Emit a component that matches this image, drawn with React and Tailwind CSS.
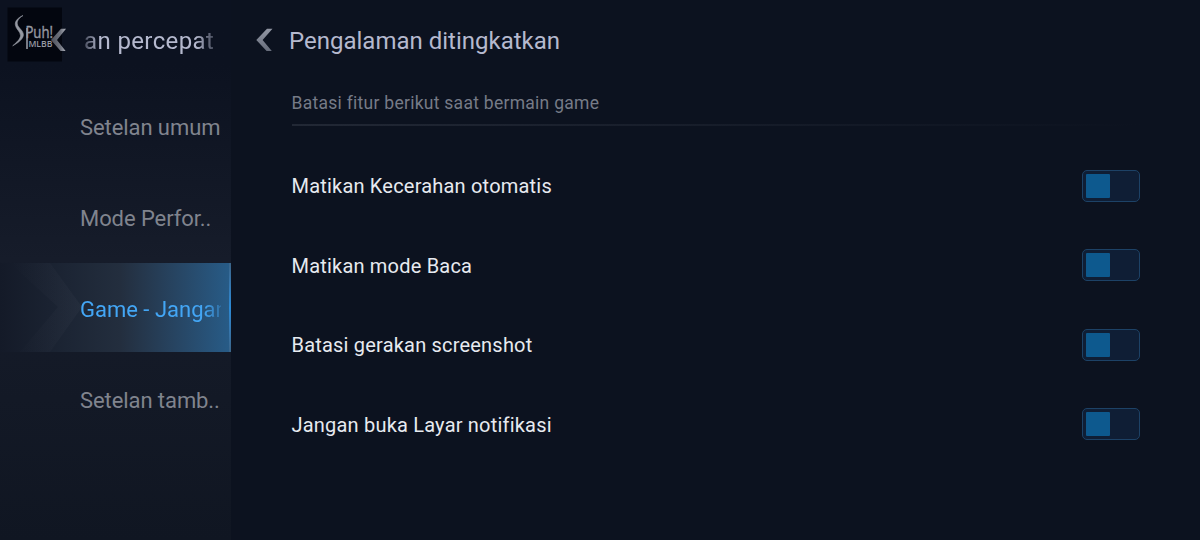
const menu = [
  { label: "Setelan umum" },
  { label: "Mode Perfor.." },
  { label: "Game - Jangan", active: true },
  { label: "Setelan tamb.." },
];

const settings = [
  "Matikan Kecerahan otomatis",
  "Matikan mode Baca",
  "Batasi gerakan screenshot",
  "Jangan buka Layar notifikasi",
];

function BackChevron() {
  return (
    <svg className="-mt-[2px] shrink-0" width="17" height="24" viewBox="0 0 17 24">
      <defs>
        <linearGradient id="back-fill" x1="0" y1="0" x2="0" y2="1">
          <stop offset="0" stopColor="#9297a4" />
          <stop offset="1" stopColor="#676d7b" />
        </linearGradient>
      </defs>
      <path d="M11 .8H16.500L6.600 12L15.800 23H10.600L.3 12Z" fill="url(#back-fill)" />
    </svg>
  );
}

function SideChevron() {
  return (
    <svg className="relative z-10 -mt-[2px] shrink-0" width="17" height="24" viewBox="0 0 17 24">
      <defs>
        <linearGradient id="side-fill" x1="0" y1="0" x2="1" y2="0">
          <stop offset="0" stopColor="#6e727d" stopOpacity=".7" />
          <stop offset=".65" stopColor="#717580" />
          <stop offset="1" stopColor="#b4b7c0" />
        </linearGradient>
      </defs>
      <path d="M11 .8H16L7 12L15.600 23H10.600L1 12Z" fill="url(#side-fill)" />
    </svg>
  );
}

function Logo() {
  return (
    <svg className="absolute left-[7px] top-[7px]" width="60" height="55" viewBox="0 0 60 55">
      <rect x="0.500" y="0.500" width="54.500" height="54" fill="#03060f" />
      <path
        d="M16 8.500C12 11 9.800 14 10.300 17C11 21 16.600 23.500 16.400 28C16.200 32 11 36 5.700 38.800C10 35 13.400 32 13.500 28.500C13.600 24.500 8.600 22 8.300 17.500C8 13.500 11.500 10.500 16 8.500Z"
        fill="#9699a2"
        stroke="#9699a2"
        strokeWidth=".6"
      />
      <path d="M20 21V42" stroke="#9699a2" strokeWidth="1.600" />
      <text x="18.400" y="31" textLength="27.600" lengthAdjust="spacingAndGlyphs" fill="#9699a2" stroke="#9699a2" strokeWidth=".4" className="font-['Open_Sans',sans-serif] text-[15.500px]">
        Puh!
      </text>
      <text x="21.400" y="39.500" textLength="24" lengthAdjust="spacingAndGlyphs" fill="#9699a2" className="font-['Open_Sans',sans-serif] text-[9.500px] font-semibold">
        MLBB
      </text>
    </svg>
  );
}

function Toggle() {
  return (
    <button className="flex h-8 w-[58px] items-center rounded-[5px] border border-[#1d4266] bg-[#0f1e35] p-[3px]">
      <span className="h-6 w-6 rounded-[1px] bg-[#0d598e]" />
    </button>
  );
}

export default function App() {
  return (
    <div className="relative flex h-[540px] w-[1200px] overflow-hidden bg-[#0c121f] font-[Roboto,sans-serif]">
      <aside className="h-full w-[231px] shrink-0 bg-linear-to-b from-[#0c1220] from-[12%] via-[#161c2a] via-[48%] to-[#101622]">
        <div className="flex h-[82px] items-center pl-[50px]">
          <SideChevron />
          <div className="ml-[17px] w-[132px] overflow-hidden whitespace-nowrap text-[24px] leading-8 tracking-[0.38px] text-[#b5b9ce] [mask-image:linear-gradient(to_right,rgba(0,0,0,.35),#000_16px,#000_112px,rgba(0,0,0,.25))]">
            an percepat
          </div>
        </div>
        <nav className="flex flex-col gap-[3px]">
          {menu.map((item) =>
            item.active ? (
              <div key={item.label} className="relative -mt-px flex h-[89px] items-center bg-linear-to-r from-[#141a28] via-[#232e3e] via-[52%] to-[#275c88] pl-20 pt-[4px]">
                <svg className="absolute left-0 top-0" width="90" height="89" viewBox="0 0 90 89">
                  <defs>
                    <linearGradient id="arrow-fill" x1="0" y1="0" x2="1" y2="0">
                      <stop offset="0" stopColor="#b6b6c4" stopOpacity="0" />
                      <stop offset="1" stopColor="#b6b6c4" stopOpacity=".04" />
                    </linearGradient>
                  </defs>
                  <path d="M10 0H50L82 44L50 89H20L58 44Z" fill="url(#arrow-fill)" />
                </svg>
                <span className="relative w-[141px] overflow-hidden whitespace-nowrap text-[22px] leading-8 text-[#43a6f5] [mask-image:linear-gradient(to_right,#000_124px,rgba(0,0,0,.3))]">
                  {item.label}
                </span>
                <span className="absolute right-0 top-0 h-full w-[2px] bg-linear-to-b from-[#3a6488] via-[#2b8ad6] to-[#3a6488]" />
              </div>
            ) : (
              <div key={item.label} className="flex h-[88px] items-center whitespace-nowrap pl-20 pt-[3px] text-[22px] leading-8 tracking-[-0.08px] text-[#80848e]">
                {item.label}
              </div>
            )
          )}
        </nav>
      </aside>
      <main className="flex-1 pl-[25px]">
        <header className="flex h-[82px] items-center">
          <BackChevron />
          <h1 className="ml-4 text-[24px] leading-8 text-[#b5b9ce]">Pengalaman ditingkatkan</h1>
        </header>
        <section className="pl-[35.500px] pr-[60px]">
          <p className="h-[42px] pt-[9px] text-[17.500px] leading-6 tracking-[0.27px] text-[#767b87]">Batasi fitur berikut saat bermain game</p>
          <div className="h-[2px] bg-linear-to-r from-[#222835] to-[#0c121f]" />
          <ul className="pt-[20px]">
            {settings.map((label) => (
              <li key={label} className="flex h-[79.500px] items-center justify-between">
                <span className="pt-px text-[20px] leading-8 tracking-[0.2px] text-[#e7eaf0]">{label}</span>
                <Toggle />
              </li>
            ))}
          </ul>
        </section>
      </main>
      <Logo />
    </div>
  );
}
